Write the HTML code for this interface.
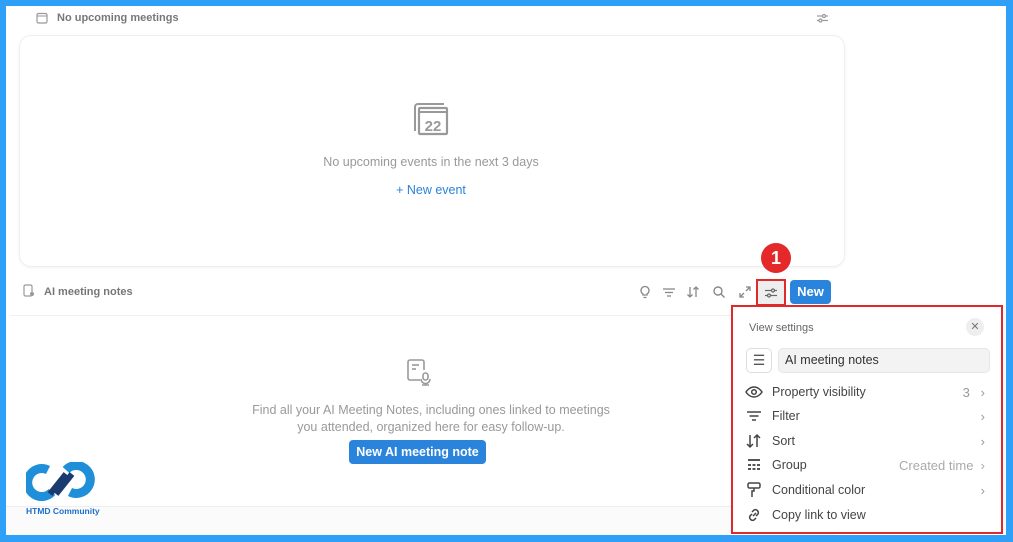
<!DOCTYPE html>
<html><head><meta charset="utf-8"><style>
*{margin:0;padding:0;box-sizing:border-box}
body{width:1013px;height:542px;background:#2ea0f7;position:relative;overflow:hidden;font-family:"Liberation Sans",sans-serif}
.inner{position:absolute;left:6px;top:6px;width:1000px;height:529px;background:#fff;overflow:hidden}
.a{position:absolute}
.t{color:#777;font-size:11px;font-weight:bold}
.menu div.row{position:absolute;left:12px;right:12px;height:24px;font-size:12.5px;color:#444;display:flex;align-items:center}
.row svg{width:18px;height:18px;margin-right:9px}
.chev{position:absolute;right:4px;color:#999;font-size:13px}
.tb{position:absolute;top:279px}
</style></head><body>
<div class="inner">
 <svg class="a" style="left:30px;top:6px" width="12" height="12" viewBox="0 0 12 12"><rect x="1" y="1.5" width="10" height="9.5" rx="1.5" fill="none" stroke="#999" stroke-width="1.2"/><line x1="1" y1="4" x2="11" y2="4" stroke="#999"/></svg>
 <div class="a t" style="left:51px;top:6px">No upcoming meetings</div>
 <svg class="a" style="left:810px;top:6px" width="13" height="12" viewBox="0 0 13 12" stroke="#999" stroke-width="1.2"><line x1="1" y1="4" x2="12" y2="4"/><line x1="1" y1="8.5" x2="12" y2="8.5"/><circle cx="8" cy="4" r="1.5" fill="#fff"/><circle cx="4.5" cy="8.5" r="1.5" fill="#fff"/></svg>
 <div class="a" style="left:13px;top:29px;width:826px;height:232px;border:1px solid #eee;border-radius:12px;box-shadow:0 1px 3px rgba(0,0,0,.05)"></div>
 <svg class="a" style="left:407px;top:95px" width="36" height="35" viewBox="0 0 36 35"><path d="M2 30V6a3 3 0 0 1 3-3h26" fill="none" stroke="#999" stroke-width="2"/><rect x="6" y="7" width="28" height="26" rx="1" fill="none" stroke="#999" stroke-width="2.2"/><line x1="6" y1="11" x2="34" y2="11" stroke="#999" stroke-width="2"/><text x="20" y="30" text-anchor="middle" font-size="15" font-weight="bold" fill="#999" font-family="Liberation Sans">22</text></svg>
 <div class="a" style="left:200px;top:149px;width:450px;text-align:center;font-size:12.5px;color:#999">No upcoming events in the next 3 days</div>
 <div class="a" style="left:200px;top:177px;width:450px;text-align:center;font-size:12.5px;color:#2b83dc">+ New event</div>

 <svg class="a" style="left:17px;top:278px" width="12" height="14" viewBox="0 0 12 14"><rect x="1" y="1" width="8" height="11" rx="1.5" fill="none" stroke="#999" stroke-width="1.2"/><circle cx="9" cy="10" r="2" fill="#999"/></svg>
 <div class="a t" style="left:38px;top:280px">AI meeting notes</div>
 <svg class="tb" style="left:633px" width="12" height="14" viewBox="0 0 12 14" fill="none" stroke="#888" stroke-width="1.3"><path d="M4 10V9a4 4 0 1 1 4 0v1zM4.5 12.5h3"/></svg>
 <svg class="tb" style="left:656px" width="14" height="14" viewBox="0 0 14 14" stroke="#888" stroke-width="1.3"><line x1="1" y1="4" x2="13" y2="4"/><line x1="3" y1="7.5" x2="11" y2="7.5"/><line x1="5" y1="11" x2="9" y2="11"/></svg>
 <svg class="tb" style="left:680px" width="14" height="14" viewBox="0 0 14 14" fill="none" stroke="#888" stroke-width="1.3"><path d="M4 2v10M1.5 9.5L4 12l2.5-2.5M10 12V2M7.5 4.5L10 2l2.5 2.5"/></svg>
 <svg class="tb" style="left:706px" width="14" height="14" viewBox="0 0 14 14" fill="none" stroke="#888" stroke-width="1.4"><circle cx="6" cy="6" r="4"/><path d="M9 9l3.5 3.5"/></svg>
 <svg class="tb" style="left:732px" width="14" height="14" viewBox="0 0 14 14" fill="none" stroke="#888" stroke-width="1.3"><path d="M2 12l4-4M2 8v4h4M12 2L8 6M8 2h4v4"/></svg>
 <div class="a" style="left:750px;top:273px;width:30px;height:27px;border:2px solid #e02a2a;background:#eee"></div>
 <svg class="a" style="left:758px;top:281px" width="14" height="12" viewBox="0 0 14 12" stroke="#666" stroke-width="1.2"><line x1="1" y1="3.5" x2="13" y2="3.5"/><line x1="1" y1="8.5" x2="13" y2="8.5"/><circle cx="9" cy="3.5" r="1.5" fill="#eee"/><circle cx="5" cy="8.5" r="1.5" fill="#eee"/></svg>
 <div class="a" style="left:755px;top:237px;width:30px;height:30px;border-radius:50%;background:#e5292b;color:#fff;font-weight:bold;font-size:18px;text-align:center;line-height:30px">1</div>
 <div class="a" style="left:784px;top:274px;width:41px;height:24px;background:#2b84dc;border-radius:4px;color:#fff;font-weight:bold;font-size:13px;text-align:center;line-height:24px">New</div>
 <div class="a" style="left:4px;top:309px;width:830px;border-top:1px solid #f0f0f0"></div>
 <div class="a" style="left:0;top:500px;width:830px;height:29px;background:#fbfbfb;border-top:1px solid #eee"></div>

 <svg class="a" style="left:400px;top:352px" width="26" height="28" viewBox="0 0 26 28" fill="none" stroke="#999" stroke-width="1.6"><path d="M14 22H4a2 2 0 0 1-2-2V4a2 2 0 0 1 2-2h12a2 2 0 0 1 2 2v8"/><line x1="6" y1="7" x2="13" y2="7"/><line x1="6" y1="11" x2="10" y2="11"/><rect x="17" y="15" width="5" height="7" rx="2.5"/><path d="M15 21a4.5 4.5 0 0 0 9 0M19.5 25.5v1M16 27h7"/></svg>
 <div class="a" style="left:200px;top:396px;width:450px;text-align:center;font-size:12.5px;color:#999;line-height:17px">Find all your AI Meeting Notes, including ones linked to meetings<br>you attended, organized here for easy follow-up.</div>
 <div class="a" style="left:343px;top:434px;width:137px;height:24px;background:#2b84dc;border-radius:4px;color:#fff;font-weight:bold;font-size:12.5px;text-align:center;line-height:24px">New AI meeting note</div>

 <svg class="a" style="left:20px;top:456px" width="70" height="42" viewBox="0 0 70 42"><path d="M22 8a14 14 0 1 0 4 22" fill="none" stroke="#1e8fd8" stroke-width="9"/><path d="M44 30a14 14 0 1 0 -4 -22" fill="none" stroke="#1e8fd8" stroke-width="9"/><path d="M24 32L40 12M30 32L46 12" stroke="#1b3a70" stroke-width="6"/></svg>
 <div class="a" style="left:20px;top:500px;font-size:8.5px;font-weight:bold;color:#1e6fc8">HTMD Community</div>

 <div class="a menu" style="left:725px;top:299px;width:272px;height:229px;border:2px solid #e02a2a;background:#fff">
  <div class="a" style="left:16px;top:15px;font-size:11px;color:#666">View settings</div>
  <div class="a" style="left:233px;top:11px;width:18px;height:18px;border-radius:50%;background:#eee;color:#777;font-size:11px;text-align:center;line-height:18px">✕</div>
  <div class="a" style="left:13px;top:41px;width:26px;height:25px;border:1px solid #ddd;border-radius:5px;color:#555;font-size:14px;text-align:center;line-height:23px">☰</div>
  <div class="a" style="left:45px;top:41px;width:212px;height:25px;background:#f3f3f3;border:1px solid #e6e6e6;border-radius:5px;font-size:12.5px;color:#333;padding-left:6px;line-height:23px">AI meeting notes</div>
  <div class="row" style="top:73px"><svg viewBox="0 0 18 18" fill="none" stroke="#444" stroke-width="1.5"><path d="M1 9s3-5 8-5 8 5 8 5-3 5-8 5-8-5-8-5z"/><circle cx="9" cy="9" r="2.3"/></svg>Property visibility<span class="chev" style="right:4px">3&nbsp;&nbsp;&nbsp;›</span></div>
  <div class="row" style="top:97px"><svg viewBox="0 0 18 18" stroke="#444" stroke-width="1.5"><line x1="2" y1="5" x2="16" y2="5"/><line x1="4.5" y1="9" x2="13.5" y2="9"/><line x1="7" y1="13" x2="11" y2="13"/></svg>Filter<span class="chev">›</span></div>
  <div class="row" style="top:122px"><svg viewBox="0 0 18 18" fill="none" stroke="#444" stroke-width="1.5"><path d="M5 3v12M2 12l3 3 3-3M12 15V3M9 6l3-3 3 3"/></svg>Sort<span class="chev">›</span></div>
  <div class="row" style="top:146px"><svg viewBox="0 0 18 18" fill="#555"><rect x="3" y="3" width="12" height="2"/><rect x="3" y="8" width="3" height="2"/><rect x="7.5" y="8" width="3" height="2"/><rect x="12" y="8" width="3" height="2"/><rect x="3" y="12" width="3" height="2"/><rect x="7.5" y="12" width="3" height="2"/><rect x="12" y="12" width="3" height="2"/></svg>Group<span class="chev" style="color:#aaa">Created time&nbsp;&nbsp;›</span></div>
  <div class="row" style="top:171px"><svg viewBox="0 0 18 18" fill="none" stroke="#444" stroke-width="1.5"><rect x="3" y="2" width="12" height="5" rx="1.5"/><path d="M9 7v3H7v6"/></svg>Conditional color<span class="chev">›</span></div>
  <div class="row" style="top:196px"><svg viewBox="0 0 18 18" fill="none" stroke="#444" stroke-width="1.5"><path d="M8 10l3-3M7 6l2-2a3 3 0 0 1 4 4l-2 2M11 12l-2 2a3 3 0 0 1-4-4l2-2"/></svg>Copy link to view</div>
 </div>
</div>
</body></html>
